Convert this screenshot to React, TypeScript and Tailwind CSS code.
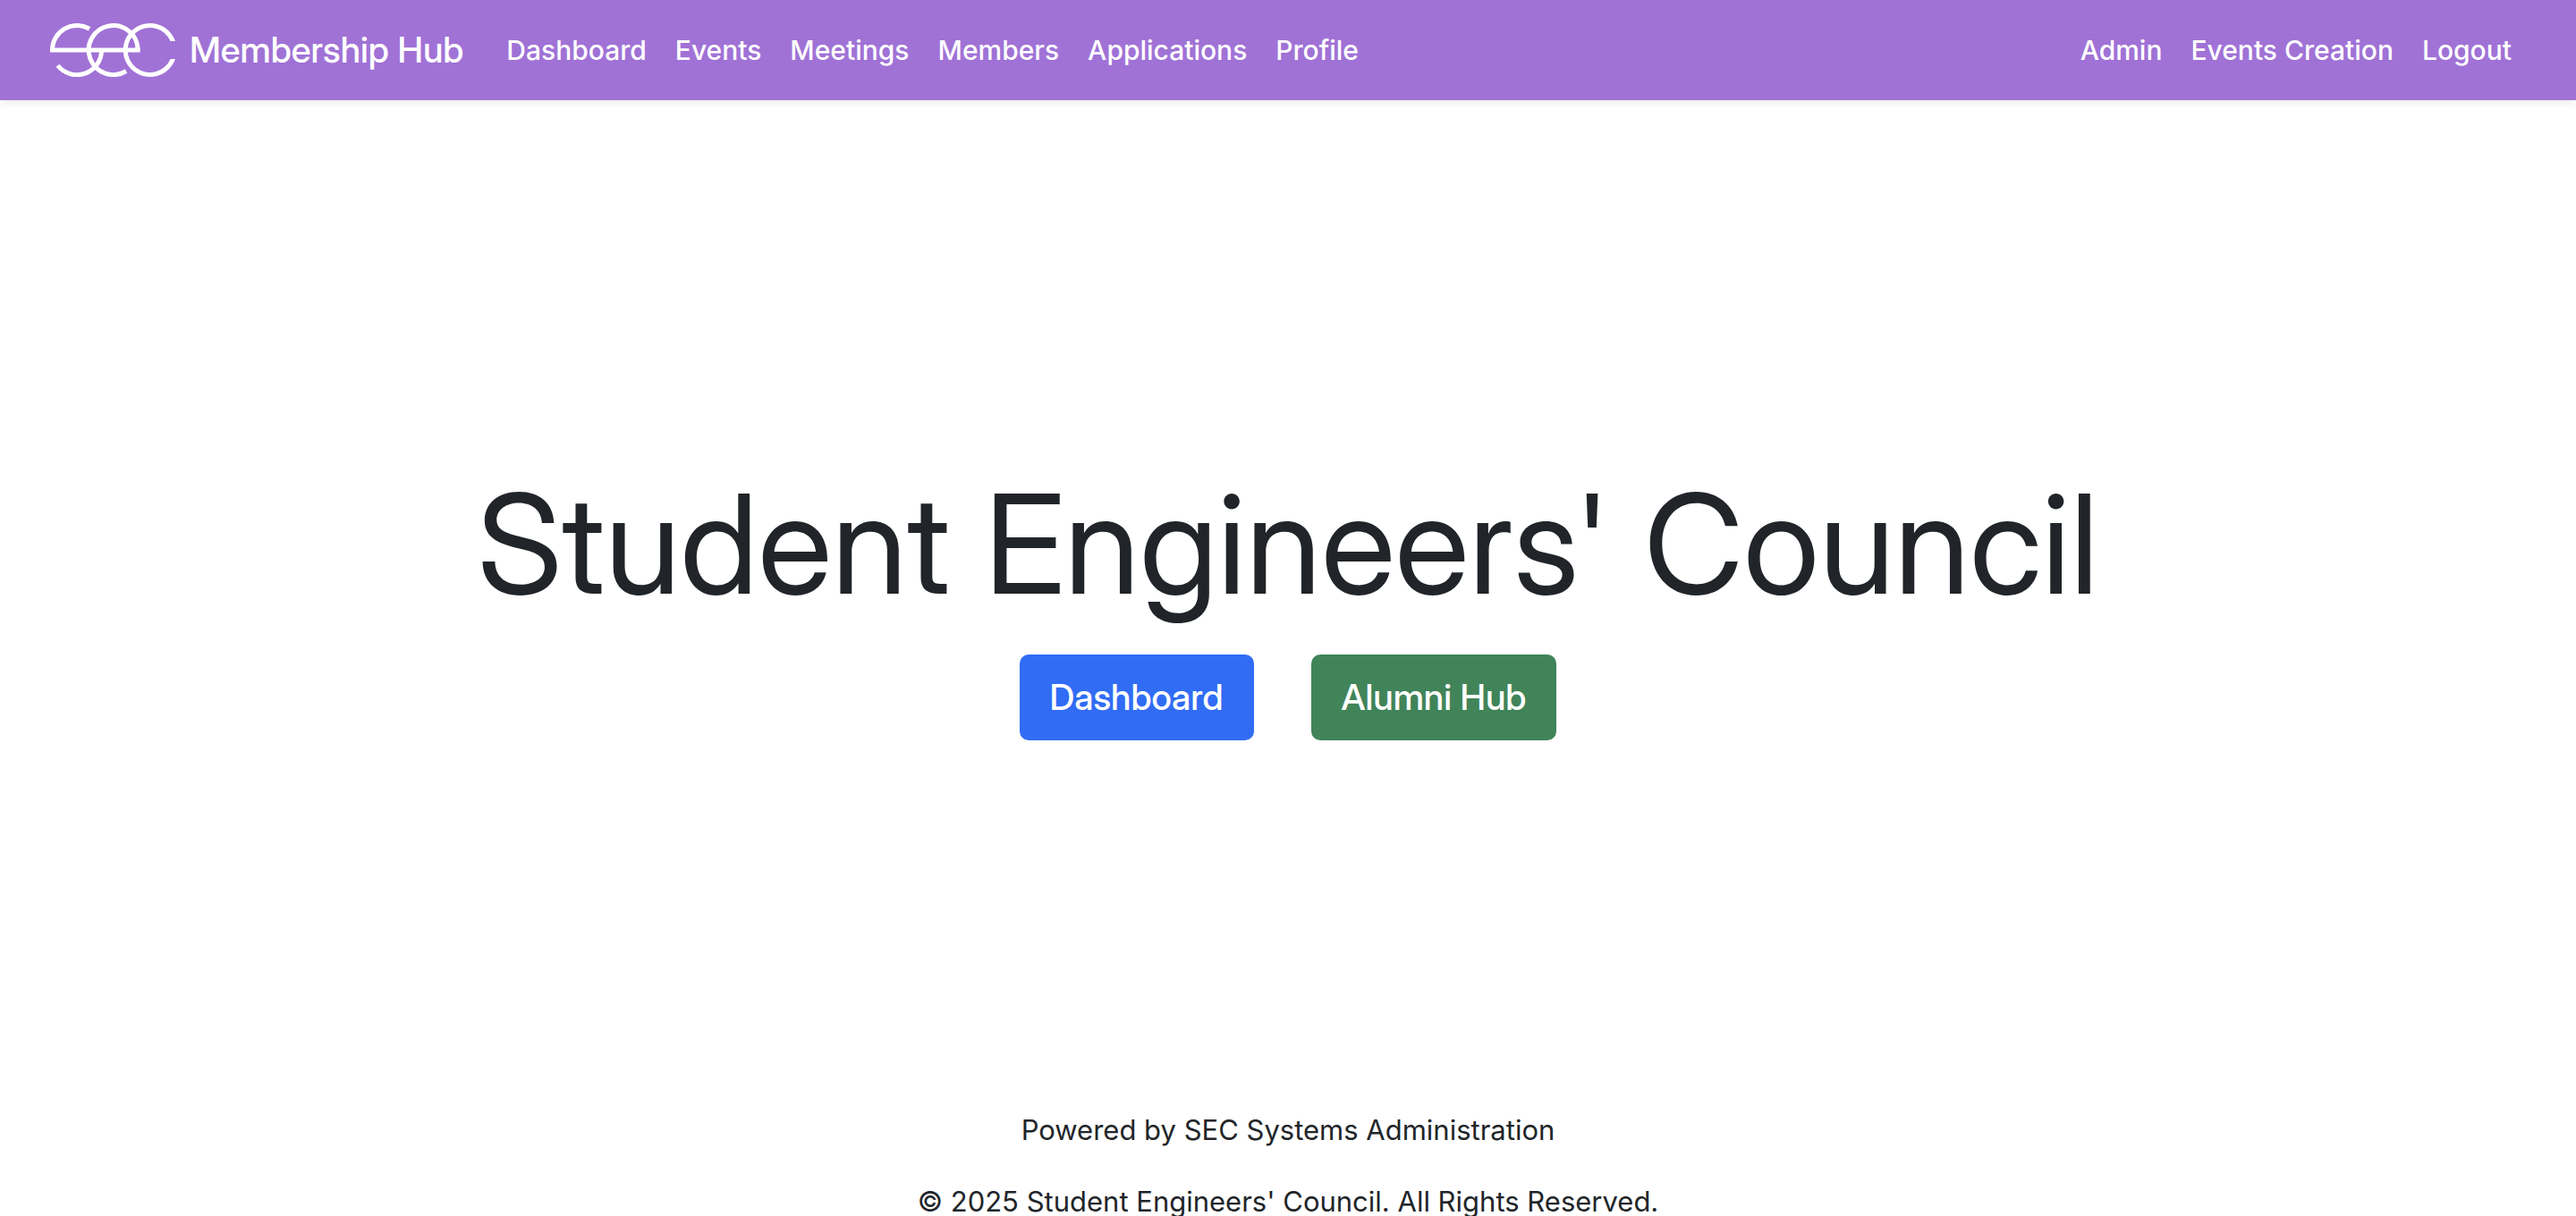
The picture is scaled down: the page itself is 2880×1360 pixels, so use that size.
const mainLinks = ['Dashboard', 'Events', 'Meetings', 'Members', 'Applications', 'Profile'];
const userLinks = ['Admin', 'Events Creation', 'Logout'];

function Logo() {
  return (
    <svg viewBox="0 0 420 180" className="h-15 w-35 shrink-0" fill="none" stroke="white" strokeWidth="15" aria-hidden="true">
      <path d="M7.500 90A82.500 82.500 0 0 1 132 18.800" />
      <path d="M25.500 141.800A82.500 82.500 0 0 0 172.500 90" />
      <path d="M0 90H302" />
      <path d="M294.500 90A82.500 82.500 0 1 0 255 160.500" />
      <path d="M419.900 60A90 90 0 1 0 419.900 120H403.700A75 75 0 1 1 403.700 60Z" fill="white" stroke="none" />
    </svg>
  );
}

function NavLinks({ items }: { items: string[] }) {
  return (
    <ul className="flex items-center gap-8">
      {items.map((item) => (
        <li key={item}>
          <a href="#" className="text-[30px] font-medium text-white">{item}</a>
        </li>
      ))}
    </ul>
  );
}

export default function App() {
  return (
    <div className="flex h-screen flex-col overflow-hidden bg-white font-['Inter',sans-serif] text-[31px] leading-12 text-[#212529]">
      <nav className="flex h-28 shrink-0 items-center bg-[#a072d6] pr-18 pl-14 shadow-[0_4px_8px_rgba(0,0,0,0.075)]">
        <a href="#" className="mr-12 flex items-center gap-4 font-['Inter_Display','Inter',sans-serif] text-[40px] font-medium text-white">
          <Logo />
          <span>Membership Hub</span>
        </a>
        <NavLinks items={mainLinks} />
        <div className="ml-auto">
          <NavLinks items={userLinks} />
        </div>
      </nav>
      <main className="flex flex-1 flex-col items-center justify-center">
        <h1 className="mb-10 font-['Inter_Display','Inter',sans-serif] text-[154px] leading-[168px] font-normal">Student Engineers' Council</h1>
        <div className="flex gap-16 font-['Inter_Display','Inter',sans-serif] text-[40px] font-medium text-white">
          <button type="button" className="h-24 rounded-[10px] bg-[#316cf4] px-[34px]">Dashboard</button>
          <button type="button" className="h-24 rounded-[10px] bg-[#418459] px-[34px]">Alumni Hub</button>
        </div>
      </main>
      <footer className="-mb-2 flex shrink-0 flex-col items-center gap-8">
        <p>Powered by SEC Systems Administration</p>
        <p>© 2025 Student Engineers' Council. All Rights Reserved.</p>
      </footer>
    </div>
  );
}
